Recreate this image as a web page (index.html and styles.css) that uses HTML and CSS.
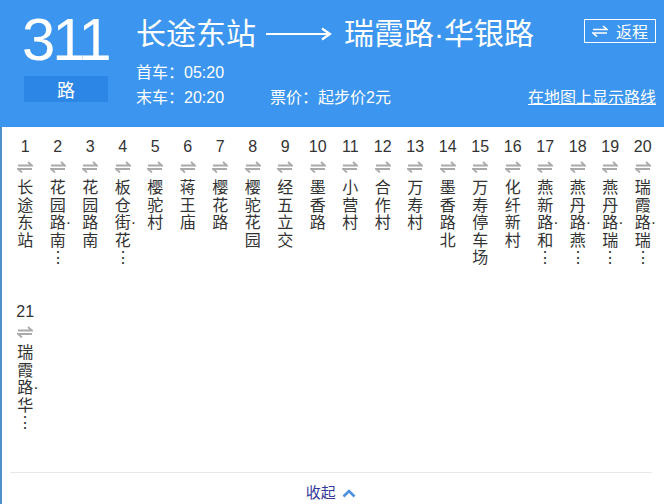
FILE: index.html
```html
<!DOCTYPE html>
<html lang="zh-CN">
  <head>
    <meta charset="UTF-8" />
    <meta name="viewport" content="width=device-width, initial-scale=1.0" />
    <title>311路 公交线路</title>
    <link rel="stylesheet" href="styles.css">
  </head>
  <body>
    <!-- shared arrow symbol for the stop list -->
    <svg class="defs" width="0" height="0">
      <symbol id="swap" viewBox="0 0 16 12">
        <polyline points="1,4.5 15,4.5 11,1" />
        <polyline points="15,8 1,8 5,11.5" />
      </symbol>
    </svg>

    <header class="route-head">
      <div class="line-no">
        <div class="num">311</div>
        <div class="unit">路</div>
      </div>
      <div class="route-info">
        <div class="title-row">
          <h1 class="title">
            <span>长途东站</span>
            <svg class="long-arrow" width="66" height="14" viewBox="0 0 66 14">
              <line x1="0" y1="7" x2="64" y2="7" />
              <polyline points="56,1.5 64,7 56,12.5" />
            </svg>
            <span>瑞霞路·华银路</span>
          </h1>
          <a class="back-btn" href="#">
            <svg class="swap" width="16" height="12"><use href="#swap" /></svg>
            返程
          </a>
        </div>
        <p class="times">首车：05:20</p>
        <div class="times-row">
          <span class="last">末车：20:20</span>
          <span class="price">票价：起步价2元</span>
          <a class="map-link" href="#">在地图上显示路线</a>
        </div>
      </div>
    </header>

    <main class="panel">
      <section class="stops">
        <div class="stop"><span class="idx">1</span><svg class="arr"><use href="#swap" /></svg><p class="name">长<br>途<br>东<br>站</p></div>
        <div class="stop"><span class="idx">2</span><svg class="arr"><use href="#swap" /></svg><p class="name">花<br>园<br>路·<br>南<br>⋮</p></div>
        <div class="stop"><span class="idx">3</span><svg class="arr"><use href="#swap" /></svg><p class="name">花<br>园<br>路<br>南</p></div>
        <div class="stop"><span class="idx">4</span><svg class="arr"><use href="#swap" /></svg><p class="name">板<br>仓<br>街·<br>花<br>⋮</p></div>
        <div class="stop"><span class="idx">5</span><svg class="arr"><use href="#swap" /></svg><p class="name">樱<br>驼<br>村</p></div>
        <div class="stop"><span class="idx">6</span><svg class="arr"><use href="#swap" /></svg><p class="name">蒋<br>王<br>庙</p></div>
        <div class="stop"><span class="idx">7</span><svg class="arr"><use href="#swap" /></svg><p class="name">樱<br>花<br>路</p></div>
        <div class="stop"><span class="idx">8</span><svg class="arr"><use href="#swap" /></svg><p class="name">樱<br>驼<br>花<br>园</p></div>
        <div class="stop"><span class="idx">9</span><svg class="arr"><use href="#swap" /></svg><p class="name">经<br>五<br>立<br>交</p></div>
        <div class="stop"><span class="idx">10</span><svg class="arr"><use href="#swap" /></svg><p class="name">墨<br>香<br>路</p></div>
        <div class="stop"><span class="idx">11</span><svg class="arr"><use href="#swap" /></svg><p class="name">小<br>营<br>村</p></div>
        <div class="stop"><span class="idx">12</span><svg class="arr"><use href="#swap" /></svg><p class="name">合<br>作<br>村</p></div>
        <div class="stop"><span class="idx">13</span><svg class="arr"><use href="#swap" /></svg><p class="name">万<br>寿<br>村</p></div>
        <div class="stop"><span class="idx">14</span><svg class="arr"><use href="#swap" /></svg><p class="name">墨<br>香<br>路<br>北</p></div>
        <div class="stop"><span class="idx">15</span><svg class="arr"><use href="#swap" /></svg><p class="name">万<br>寿<br>停<br>车<br>场</p></div>
        <div class="stop"><span class="idx">16</span><svg class="arr"><use href="#swap" /></svg><p class="name">化<br>纤<br>新<br>村</p></div>
        <div class="stop"><span class="idx">17</span><svg class="arr"><use href="#swap" /></svg><p class="name">燕<br>新<br>路·<br>和<br>⋮</p></div>
        <div class="stop"><span class="idx">18</span><svg class="arr"><use href="#swap" /></svg><p class="name">燕<br>丹<br>路·<br>燕<br>⋮</p></div>
        <div class="stop"><span class="idx">19</span><svg class="arr"><use href="#swap" /></svg><p class="name">燕<br>丹<br>路·<br>瑞<br>⋮</p></div>
        <div class="stop"><span class="idx">20</span><svg class="arr"><use href="#swap" /></svg><p class="name">瑞<br>霞<br>路·<br>瑞<br>⋮</p></div>
        <div class="stop"><span class="idx">21</span><svg class="arr"><use href="#swap" /></svg><p class="name">瑞<br>霞<br>路·<br>华<br>⋮</p></div>
      </section>

      <div class="fold">
        <a href="#">收起
          <svg width="14" height="10" viewBox="0 0 14 10">
            <polyline points="1.5,8.5 7,3 12.5,8.5" />
          </svg>
        </a>
      </div>
    </main>
  </body>
</html>
```

FILE: styles.css
```css
* {
  margin: 0;
  box-sizing: border-box;
}

html,
body {
  overflow: hidden;
}

body {
  font-family: "Liberation Sans", "Noto Sans CJK SC", sans-serif;
  color: #333;
  background-color: #fff;
}

a {
  color: inherit;
}

.defs {
  position: absolute;
  width: 0;
  height: 0;
}

/* blue header */
.route-head {
  display: flex;
  height: 127px;
  padding: 0 8px 0 22px;
  background-color: #3c95ee;
  color: #fff;
}

.line-no {
  width: 86px;
  padding-top: 10px;
}

.num {
  font-size: 60px;
  line-height: 60px;
  letter-spacing: -3px;
  text-align: center;
}

.unit {
  margin: 6px 0 0 2px;
  height: 26px;
  background-color: #2b86e6;
  font-family: "Noto Sans CJK SC", sans-serif;
  font-size: 18px;
  line-height: 26px;
  text-align: center;
}

.route-info {
  flex: 1;
  margin-left: 28px;
  padding-top: 14px;
}

.title-row {
  display: flex;
  justify-content: space-between;
  height: 40px;
}

.title {
  display: flex;
  align-items: center;
  gap: 10px;
  font-size: 30px;
  font-weight: normal;
  line-height: 40px;
}

.long-arrow {
  margin-right: 2px;
}

.long-arrow line,
.long-arrow polyline {
  fill: none;
  stroke: #fff;
  stroke-width: 2.2;
}

.back-btn {
  display: flex;
  align-items: center;
  justify-content: center;
  gap: 8px;
  margin-top: 5px;
  width: 72px;
  height: 24px;
  border: 1px solid #fff;
  font-size: 16px;
  text-decoration: none;
}

.back-btn .swap {
  fill: none;
  stroke: #fff;
  stroke-width: 1.6;
}

.times {
  margin-top: 6px;
  font-size: 16px;
  line-height: 25px;
}

.times-row {
  display: flex;
  font-size: 16px;
  line-height: 25px;
}

.last {
  width: 134px;
}

.map-link {
  margin-left: auto;
  text-decoration: underline;
}

/* stop list */
.panel {
  border-left: 2px solid #4d8fc8;
}

.stops {
  display: flex;
  flex-wrap: wrap;
  padding: 10px 0 0 7px;
}

.stop {
  width: 32.5px;
  height: 165px;
  text-align: center;
}

.idx {
  display: block;
  font-size: 16px;
  line-height: 20px;
  color: #333;
}

.arr {
  display: block;
  width: 16px;
  height: 12px;
  margin: 4px auto 0;
  fill: none;
  stroke: #aaa;
  stroke-width: 1.8;
}

.name {
  width: 16px;
  margin: 6px auto 0;
  font-size: 16px;
  line-height: 17.5px;
  text-align: left;
  white-space: nowrap;
  color: #333;
}

.fold {
  margin: 5px 12px 0 8px;
  padding-top: 7px;
  border-top: 1px solid #e8e8e8;
  text-align: center;
  line-height: 24px;
}

.fold a {
  font-family: "Noto Sans CJK SC", sans-serif;
  font-size: 15px;
  color: #35399a;
  text-decoration: none;
}

.fold svg {
  margin-left: 3px;
}

.fold polyline {
  fill: none;
  stroke: #4a90e2;
  stroke-width: 2.6;
}
```
